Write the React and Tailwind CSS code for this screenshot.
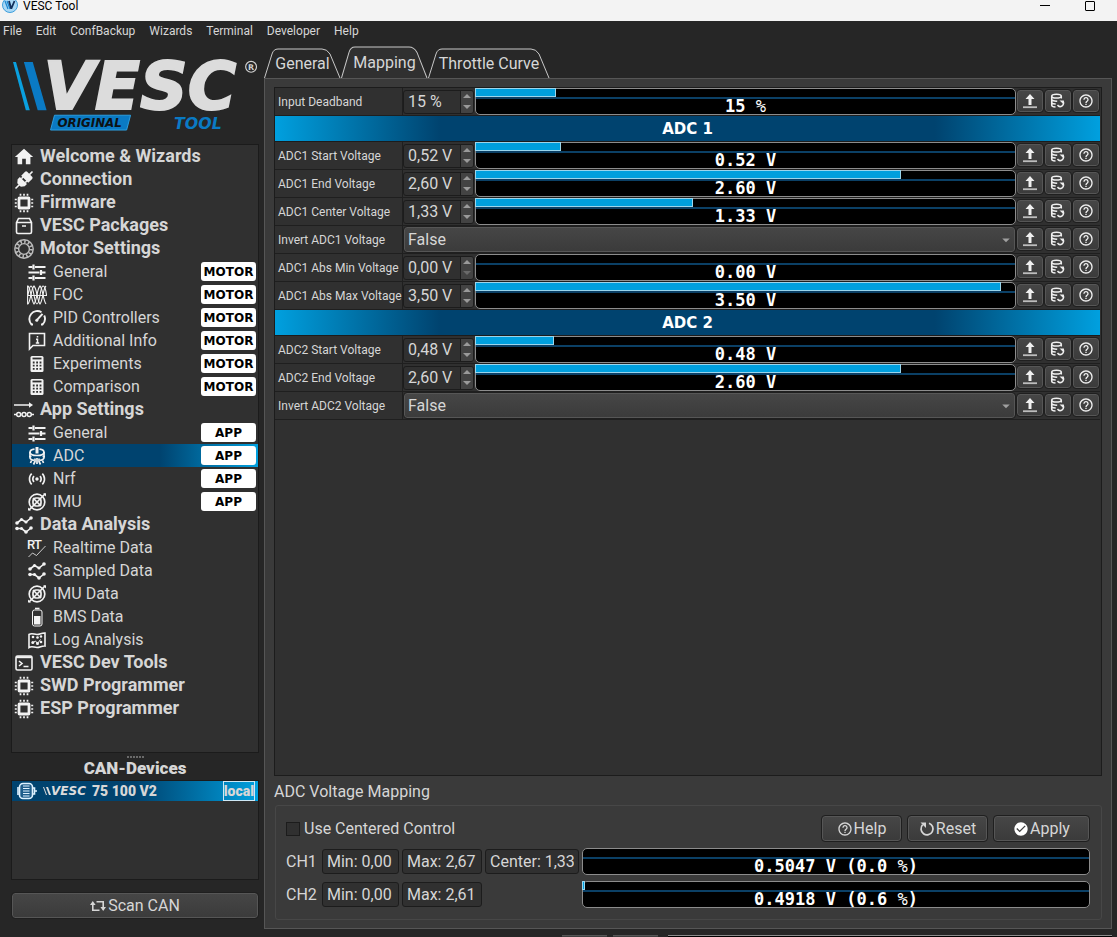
import { useState } from "react";
import { MdHome, MdSensors, MdHelpOutline, MdCheckCircle, MdArrowDropDown } from "react-icons/md";

const Svg = ({ children, size = 20, ...rest }) => (
  <svg width={size} height={size} viewBox="0 0 20 20" fill="none" stroke="currentColor" strokeWidth="1.6" aria-hidden="true" {...rest}>
    {children}
  </svg>
);

const PlugIcon = () => (
  <Svg>
    <g transform="rotate(45 10 10)" fill="currentColor" stroke="none">
      <path d="M9.200-2h1.600v4H9.200zM6.500 2h7A1.500 1.500 0 0 1 15 3.500V9H5V3.500A1.500 1.500 0 0 1 6.500 2z" />
      <path d="M5 10.800h10V14l-2.500 3h-5L5 14zM9.200 17h1.600v5H9.200z" />
      <path d="M6.500 8h1.500v3H6.500zM12 8h1.500v3H12z" />
    </g>
  </Svg>
);

const ChipIcon = () => (
  <Svg>
    <rect x="5" y="5" width="10" height="10" rx=".5" strokeWidth="2.800" />
    <path d="M6.500.8v2M10 .8v2M13.500.8v2M6.500 17.200v2M10 17.200v2M13.500 17.200v2M.8 6.500h2M.8 10h2M.8 13.500h2M17.200 6.500h2M17.200 10h2M17.200 13.500h2" strokeWidth="1.700" />
  </Svg>
);

const PackageIcon = () => (
  <Svg>
    <path d="M2.500 6.500 4.500 2.500h11l2 4v9.500a1.500 1.500 0 0 1-1.500 1.500H4A1.500 1.500 0 0 1 2.500 16zM2.500 6.500h15M8 10h4" />
  </Svg>
);

const MotorIcon = () => (
  <Svg stroke="#bdbdbd">
    <circle cx="10" cy="10" r="9.200" strokeWidth="1.400" />
    <circle cx="10" cy="10" r="7.300" strokeWidth="3" strokeDasharray="1.500 2.320" />
    <circle cx="10" cy="10" r="5.400" strokeWidth="1.400" />
  </Svg>
);

const SlidersIcon = () => (
  <Svg strokeWidth="1.800">
    <path d="M1.500 5h4M8 5h10.500M1.500 10.500h11M15 10.500h3.500M1.500 16h4M8 16h10.500" />
    <path d="M6.500 2.500v5M14 8v5M6.500 13.500v5" strokeWidth="2.200" />
  </Svg>
);

const FocIcon = () => (
  <Svg strokeWidth="1.100">
    <path d="M.6 .5v19M.5 10.500h19.500" />
    <path d="M1 1c3 3 3 14 6 18 3-4 3-15 6-18 3 3 3 14 6 18" />
    <path d="M1 19C4 15 4 4 7 1c3 3 3 14 6 18 3-4 3-15 6-18" />
    <path d="M1 10c1-6 2-9 3-9 3 0 3 18 6 18s3-18 6-18c2 0 3 5 3.500 9" />
  </Svg>
);

const GaugeIcon = () => (
  <Svg strokeWidth="1.900">
    <path d="M4.500 16.500a8 8 0 0 1 10-12.300M17.200 7.500a8 8 0 0 1-1.700 9" />
    <path d="M4 16.500h2M14 16.500h2" />
    <path d="m9.800 12.200 5.700-6.400" strokeWidth="2" />
    <circle cx="9.800" cy="12.200" r="1.500" fill="currentColor" stroke="none" />
  </Svg>
);

const InfoIcon = () => (
  <Svg>
    <path d="M2.500 18V2.500h15v12H6z" />
    <path d="M10.500 5v1.600M9 8.300h1.500v3.600M8.800 12h3.400" strokeWidth="1.500" />
  </Svg>
);

const CalculatorIcon = () => (
  <Svg>
    <path d="M5 2h10a1.500 1.500 0 0 1 1.500 1.500v13A1.500 1.500 0 0 1 15 18H5a1.500 1.500 0 0 1-1.500-1.500v-13A1.500 1.500 0 0 1 5 2z" fill="currentColor" stroke="none" />
    <path d="M5.500 4.500h9" stroke="#303030" strokeWidth="1.800" />
    <path d="M5.800 8.500h8.600M5.800 11.700h8.600M5.800 14.900h8.600" stroke="#303030" strokeWidth="1.800" strokeDasharray="1.800 1.600" />
  </Svg>
);

const AppIcon = () => (
  <Svg strokeWidth="1.500">
    <path d="M0 5h16" />
    <path d="m15 2.300 4 2.700-4 2.700z" fill="currentColor" stroke="none" />
    <path d="M0 14.500h2.500M17.500 14.500H20" />
    <circle cx="4.700" cy="14.500" r="2" />
    <circle cx="10" cy="14.500" r="2" />
    <circle cx="15.300" cy="14.500" r="2" />
  </Svg>
);

const AdcIcon = () => (
  <Svg strokeWidth="1.700">
    <path d="M7.500 3.200C4.800 3.600 3 4.800 3 6.200c0 2 3 3.300 7 3.300s7-1.300 7-3.300c0-1.400-1.800-2.600-4.500-3" />
    <path d="M3 6v5.500c0 1.500 2 2.500 4 2.800M17 6v5.500c0 1.500-2 2.500-4 2.800M2 10.500h2.500M15.500 10.500H18" />
    <path d="m4.500 14.500-1 2.500M15.500 14.500l1 2.500M8 12.500v3l-1.500 3M12 12.500v3l1.500 3M10 12v6" />
    <path d="M10 1v6.500" strokeWidth="3" />
  </Svg>
);

const ImuIcon = () => (
  <Svg strokeWidth="1.700">
    <circle cx="10" cy="10" r="7.800" />
    <rect x="6" y="6" width="8" height="8" rx="3" />
    <path d="M2 18 18.500 1.500M6 6l8 8" />
    <path d="M1 18.500v-3l3 3zM19 1.500v3l-3-3z" fill="currentColor" stroke="none" />
  </Svg>
);

const ChartIcon = () => (
  <Svg strokeWidth="1.600">
    <path d="m3 8 4.500-3.500L12 7l5-4M3 13.500h4.500l4.500 3.500 5-4" />
    <g fill="currentColor" stroke="none">
      <circle cx="3" cy="8" r="1.800" /><circle cx="7.500" cy="4.500" r="1.600" /><circle cx="12" cy="7" r="1.600" /><circle cx="17" cy="3" r="1.800" />
      <circle cx="3" cy="13.500" r="1.800" /><circle cx="7.500" cy="13.500" r="1.600" /><circle cx="12" cy="17" r="1.800" /><circle cx="17" cy="13" r="1.800" />
    </g>
  </Svg>
);

const RealtimeIcon = () => (
  <Svg className="overflow-visible">
    <text x="1" y="11" fontSize="13" fill="currentColor" stroke="none" className="font-['Roboto',sans-serif] font-medium">
      <tspan x="0">R</tspan>
      <tspan x="7">T</tspan>
    </text>
    <path d="m1.500 19 4-4 4 2.500L18.500 8" strokeWidth=".8" />
  </Svg>
);

const BatteryIcon = () => (
  <Svg>
    <rect x="5.500" y="3" width="9.500" height="16" rx="2" strokeWidth="1" />
    <path d="M8 1.500h4.500" />
    <path d="M7 9h6.500v8.500H7z" fill="currentColor" stroke="none" />
  </Svg>
);

const MapIcon = () => (
  <Svg strokeWidth="1.600">
    <path d="M2 4.500c3-2 5 0 8 0s5-2 8-1.500v13c-3-.5-5 1.500-8 1.500s-5-2-8 0z" />
    <path d="m5.500 13 3-2 2 2.500 3-4" strokeWidth="1" />
    <g fill="currentColor" stroke="none">
      <circle cx="6" cy="7" r="1.300" /><circle cx="10.500" cy="7.500" r="1.300" /><circle cx="14" cy="6.500" r="1.200" />
      <circle cx="5.800" cy="12.500" r="1.500" /><circle cx="10.500" cy="13.500" r="1.500" /><circle cx="14" cy="12" r="1.300" />
    </g>
  </Svg>
);

const ConsoleIcon = () => (
  <Svg>
    <rect x="2" y="3" width="16" height="14" rx="1.500" />
    <path d="M2 4.200h16" strokeWidth="2" />
    <path d="m5 8 3 2.500L5 13M9.500 13.500h5" />
  </Svg>
);

const UploadIcon = () => (
  <Svg size={16} viewBox="0 0 16 16">
    <path d="M8 1 3.500 6H6.500v6h3V6h3z" fill="currentColor" stroke="none" />
    <path d="M1 14.200h14" stroke="#bdbdbd" strokeWidth="1.800" />
  </Svg>
);

const DatabaseIcon = () => (
  <Svg size={16} viewBox="0 0 16 16" strokeWidth="1.500">
    <ellipse cx="6.500" cy="3.200" rx="4.800" ry="1.900" />
    <path d="M1.700 3.200v9c0 1 1.800 1.700 3.800 1.800M11.300 3.200v2.300M1.700 6.300c0 1.200 2.800 2 5.500 1.800M1.700 9.300c0 1.100 2 1.700 4 1.700" />
    <path d="M13 8.200a3.300 3.300 0 1 1-5.500 3.800" />
    <path d="M9.500 7.500h4.300v4z" fill="currentColor" stroke="none" />
  </Svg>
);

const ResetIcon = () => (
  <Svg size={16} viewBox="0 0 16 16" strokeWidth="1.700">
    <path d="M10 2.200a6 6 0 1 1-6.300 1.500" />
    <path d="M1.500 1.500h5.500v5.500z" fill="currentColor" stroke="none" />
  </Svg>
);

const ScanIcon = () => (
  <Svg size={16} viewBox="0 0 16 16" strokeWidth="1.600">
    <path d="M6.500 3.700h6.700v6M9.500 12.300H2.800v-6" />
    <path d="M2.800 3 0 7h5.600zM13.200 13l2.800-4h-5.600z" fill="currentColor" stroke="none" />
  </Svg>
);

const DeviceIcon = () => (
  <Svg>
    <rect x="2.500" y="2.500" width="13" height="15" rx="3.500" fill="#1f5d8a" />
    <path d="M1 6v8M15.500 7h2v6h-2M17.500 10H20" />
    <path d="M6 5h6.500M6 7.500h6.500M6 10h6.500M6 12.500h6.500M6 15h6.500" strokeWidth="1.200" />
  </Svg>
);

const Logo = () => (
  <svg viewBox="0 0 250 80" className="w-full overflow-visible" role="img" aria-label="VESC Original Tool">
    <path d="M1 10h3l14 49h-4z" fill="#0aa0df" />
    <path d="M12 10h9l14 49h-9z" fill="#0a7ac4" />
    <text x="32" y="58" fontSize="67" fill="#dcdcdc" stroke="#dcdcdc" strokeWidth="2" className="font-['DejaVu_Sans',sans-serif] font-bold italic">VESC</text>
    <circle cx="242" cy="15" r="5.500" fill="none" stroke="#d0d0d0" strokeWidth="1.200" />
    <text x="242" y="18" fontSize="8" textAnchor="middle" fill="#d0d0d0" className="font-['DejaVu_Sans',sans-serif] font-bold">R</text>
    <path d="M43 64h77l-4 15H39z" fill="#0a7ac4" stroke="#2d9ee0" />
    <text x="46" y="76" fontSize="12" fill="#0d1114" className="font-['DejaVu_Sans',sans-serif] font-bold italic">ORIGINAL</text>
    <text x="164" y="78" fontSize="16" fill="#0a7ac4" className="font-['DejaVu_Sans',sans-serif] font-bold italic">TOOL</text>
  </svg>
);

const menus = ["File", "Edit", "ConfBackup", "Wizards", "Terminal", "Developer", "Help"];

const pages = [
  { name: "Welcome & Wizards", icon: <MdHome size={22} className="shrink-0" /> },
  { name: "Connection", icon: <PlugIcon /> },
  { name: "Firmware", icon: <ChipIcon /> },
  { name: "VESC Packages", icon: <PackageIcon /> },
  { name: "Motor Settings", icon: <MotorIcon /> },
  { name: "General", icon: <SlidersIcon />, sub: true, badge: "MOTOR" },
  { name: "FOC", icon: <FocIcon />, sub: true, badge: "MOTOR" },
  { name: "PID Controllers", icon: <GaugeIcon />, sub: true, badge: "MOTOR" },
  { name: "Additional Info", icon: <InfoIcon />, sub: true, badge: "MOTOR" },
  { name: "Experiments", icon: <CalculatorIcon />, sub: true, badge: "MOTOR" },
  { name: "Comparison", icon: <CalculatorIcon />, sub: true, badge: "MOTOR" },
  { name: "App Settings", icon: <AppIcon /> },
  { name: "General", icon: <SlidersIcon />, sub: true, badge: "APP" },
  { name: "ADC", icon: <AdcIcon />, sub: true, badge: "APP" },
  { name: "Nrf", icon: <MdSensors size={20} />, sub: true, badge: "APP" },
  { name: "IMU", icon: <ImuIcon />, sub: true, badge: "APP" },
  { name: "Data Analysis", icon: <ChartIcon /> },
  { name: "Realtime Data", icon: <RealtimeIcon />, sub: true },
  { name: "Sampled Data", icon: <ChartIcon />, sub: true },
  { name: "IMU Data", icon: <ImuIcon />, sub: true },
  { name: "BMS Data", icon: <BatteryIcon />, sub: true },
  { name: "Log Analysis", icon: <MapIcon />, sub: true },
  { name: "VESC Dev Tools", icon: <ConsoleIcon /> },
  { name: "SWD Programmer", icon: <ChipIcon /> },
  { name: "ESP Programmer", icon: <ChipIcon /> },
];

const params = [
  { label: "Input Deadband", value: "15 %", text: "15 %", pct: 15 },
  { group: "ADC 1" },
  { label: "ADC1 Start Voltage", value: "0,52 V", text: "0.52 V", pct: 16 },
  { label: "ADC1 End Voltage", value: "2,60 V", text: "2.60 V", pct: 79 },
  { label: "ADC1 Center Voltage", value: "1,33 V", text: "1.33 V", pct: 40.5 },
  { label: "Invert ADC1 Voltage", bool: true },
  { label: "ADC1 Abs Min Voltage", value: "0,00 V", text: "0.00 V", pct: 0 },
  { label: "ADC1 Abs Max Voltage", value: "3,50 V", text: "3.50 V", pct: 97.5 },
  { group: "ADC 2" },
  { label: "ADC2 Start Voltage", value: "0,48 V", text: "0.48 V", pct: 14.6 },
  { label: "ADC2 End Voltage", value: "2,60 V", text: "2.60 V", pct: 79 },
  { label: "Invert ADC2 Voltage", bool: true },
];

const raised = "border border-[#565656] bg-linear-to-b from-[#464646] to-[#3b3b3b] rounded-[3px] outline outline-[#1f1f1f]";

function ValueBar({ pct, text }) {
  return (
    <div className="relative flex-1 h-[27px] rounded-[5px] border border-[#8c8c8c] bg-black">
      <div className="h-2 border-b-2 border-[#0b4066] box-content" />
      {pct > 0 && (
        <div className="absolute -left-px -top-px h-[9px] bg-[#009fdd] border border-[#9bd5ec]" style={{ width: `${pct}%` }} />
      )}
      <div className="text-center leading-[14px] text-[17px] font-bold text-white font-['DejaVu_Sans_Mono',monospace] whitespace-pre">
        {text.split("%")[0]}
        {text.includes("%") && <span className="font-normal">%</span>}
        {text.split("%")[1]}
      </div>
    </div>
  );
}

function SpinBox({ id, value }) {
  const [val, setVal] = useState(value);
  return (
    <div className="flex w-[71px] h-6 rounded-[3px] border border-[#1c1c1c] bg-[#303030] overflow-hidden">
      <input id={id} value={val} onChange={(e) => setVal(e.target.value)} className="flex-1 min-w-0 pl-1 bg-transparent outline-none" />
      <div className="flex flex-col w-[13px] border-l border-[#1c1c1c] bg-[#434343] text-[#9a9a9a]">
        <button aria-label="Increase" className="flex-1 flex items-center justify-center">
          <svg width="8" height="4" viewBox="0 0 8 4"><path d="M0 4 4 0l4 4z" fill="currentColor" /></svg>
        </button>
        <button aria-label="Decrease" disabled={val.startsWith("0,00")} className="flex-1 flex items-center justify-center disabled:text-[#6a6a6a]">
          <svg width="8" height="4" viewBox="0 0 8 4"><path d="M0 0h8L4 4z" fill="currentColor" /></svg>
        </button>
      </div>
    </div>
  );
}

function RowButton({ label, children }) {
  return (
    <button aria-label={label} className={`${raised} w-[26px] h-[22px] flex items-center justify-center text-[#f0f0f0]`}>
      {children}
    </button>
  );
}

function ParamRow({ row, index }) {
  if (row.group) {
    return (
      <tr>
        <th colSpan={3} className="h-[26px] border-b border-[#1c1c1c] bg-[linear-gradient(to_right,#00a0df,#00436f_20%,#00436f_80%,#00a0df)] text-[15px] leading-5 text-white font-bold font-['DejaVu_Sans',sans-serif]">
          {row.group}
        </th>
      </tr>
    );
  }
  const id = `param-${index}`;
  return (
    <tr>
      <td className="h-7 pl-[3px] border-b border-r border-[#1f1f1f] whitespace-nowrap text-[12px] leading-4">
        <label htmlFor={id}>{row.label}</label>
      </td>
      <td className="h-7 border-b border-[#1f1f1f]">
        {row.bool ? (
          <div className="relative mx-px">
            <select id={id} defaultValue="False" className={`${raised} w-full h-[25px] pl-[3px] appearance-none block`}>
              <option>False</option>
              <option>True</option>
            </select>
            <MdArrowDropDown size={18} className="absolute right-0 top-1 text-[#a0a0a0] pointer-events-none" />
          </div>
        ) : (
          <div className="flex items-center gap-px">
            <SpinBox id={id} value={row.value} />
            <ValueBar pct={row.pct} text={row.text} />
          </div>
        )}
      </td>
      <td className="h-7 border-b border-[#1f1f1f]">
        <div className="flex gap-[2px] pl-px pb-px">
          <RowButton label={`Read ${row.label}`}><UploadIcon /></RowButton>
          <RowButton label={`Default ${row.label}`}><DatabaseIcon /></RowButton>
          <RowButton label={`Help ${row.label}`}><MdHelpOutline size={16} /></RowButton>
        </div>
      </td>
    </tr>
  );
}

function Tab({ name, width, active, onClick }) {
  return (
    <button role="tab" aria-selected={active} onClick={onClick} className={`relative pt-[2px] text-center ${active ? "h-8" : "h-[30px]"}`} style={{ width }}>
      <svg className="absolute inset-0 w-full h-full" viewBox={`0 0 ${width} 30`} preserveAspectRatio="none">
        <path
          d={`M.5 30 8 6Q9.500 1 14 1H${width - 19}Q${width - 14} 1 ${width - 11} 6L${width - 1} 30`}
          fill={active ? "#303030" : "#282828"}
          stroke="#c8c8c8"
        />
      </svg>
      <span className="relative whitespace-nowrap">{name}</span>
    </button>
  );
}

function Sidebar() {
  const [current, setCurrent] = useState(13);
  return (
    <aside className="w-[248px] shrink-0 flex flex-col">
      <div className="h-[93px] pt-[11px] pl-px">
        <Logo />
      </div>
      <nav className="mt-[10px] flex-1 border border-[#1b1b1b] bg-[#303030]">
        {pages.map((page, i) => (
          <button
            key={i}
            onClick={() => setCurrent(i)}
            className={`w-full h-[23px] flex items-center pr-[2px] text-left ${page.sub ? "pl-[15px]" : "pl-[2px] font-bold"} ${i === current ? "bg-linear-to-r from-[#00436f] from-60% to-[#00a0df]" : ""}`}
          >
            <span className="w-5 flex justify-center text-[#f2f2f2]">{page.icon}</span>
            <span className={`flex-1 pl-[6px] ${page.sub ? "" : "pb-px text-[18px]"}`}>{page.name}</span>
            {page.badge && (
              <span className="w-[55px] h-[19px] rounded-[3px] bg-white text-black text-center text-[12px] leading-5 font-bold font-['DejaVu_Sans',sans-serif]">
                {page.badge}
              </span>
            )}
          </button>
        ))}
      </nav>
      <div className="h-[7px] flex items-center justify-center gap-px">
        {[0, 1, 2, 3, 4, 5].map((n) => (
          <span key={n} className="w-[2px] h-[2px] bg-[#6a6a6a]" />
        ))}
      </div>
      <h2 className="h-5 leading-4 text-center text-[17px] font-black">CAN-Devices</h2>
      <div className="h-[100px] border border-[#1b1b1b] bg-[#303030]">
        <button className="w-full h-5 pl-[5px] pr-[3px] flex items-center bg-linear-to-r from-[#00436f] from-50% to-[#00a0df] text-[14px] leading-[18px] font-black">
          <span className="text-[#dff2ff]"><DeviceIcon /></span>
          <svg width="44" height="10" viewBox="0 0 44 10" className="ml-[6px] overflow-visible" aria-hidden="true">
            <path d="M0 1h1l3 8H3zM3 1h2l3 8H6z" fill="#dcdcdc" />
            <text x="8" y="9" fontSize="12" fill="#dcdcdc" className="font-['DejaVu_Sans',sans-serif] font-bold italic">VESC</text>
          </svg>
          <span className="flex-1 pl-[5px] text-left">75 100 V2</span>
          <span className="border border-[#cfe8f5]">local</span>
        </button>
      </div>
      <button className={`${raised} mx-px mt-[13px] h-[25px] flex items-center justify-center gap-[2px]`}>
        <ScanIcon /> Scan CAN
      </button>
    </aside>
  );
}

const ReadBox = ({ label, value, className }) => (
  <input aria-label={label} defaultValue={value} className={`${className} h-[25px] px-1 rounded-[3px] border border-[#1c1c1c] bg-[#303030] outline-none`} />
);

function VoltageMapping() {
  const action = `${raised} h-[25px] flex items-center justify-center gap-px`;
  return (
    <section>
      <h2 className="mt-1 leading-6">ADC Voltage Mapping</h2>
      <div className="mt-px ml-px p-[10px] pr-[11px] pb-[11px] rounded-[3px] border border-[#474747]">
        <div className="flex items-center gap-[7px] pr-px">
          <label className="flex-1 flex items-center gap-1">
            <input type="checkbox" className="appearance-none size-[14px] border border-[#1c1c1c] bg-[#303030] checked:bg-[#009fdd]" />
            Use Centered Control
          </label>
          <button className={`${action} w-[79px]`}><MdHelpOutline size={16} /> Help</button>
          <button className={`${action} w-[79px]`}><ResetIcon /> Reset</button>
          <button className={`${action} w-[95px]`}><MdCheckCircle size={16} color="#fff" /> Apply</button>
        </div>
        <div className="mt-[7px] flex items-center gap-[3px]">
          <span className="w-[33px]">CH1</span>
          <ReadBox label="CH1 min" value="Min: 0,00" className="w-[77px]" />
          <ReadBox label="CH1 max" value="Max: 2,67" className="w-[80px]" />
          <ReadBox label="CH1 center" value="Center: 1,33" className="w-[94px]" />
          <ValueBar pct={0} text="0.5047 V (0.0 %)" />
        </div>
        <div className="mt-[6px] flex items-center gap-[3px]">
          <span className="w-[33px]">CH2</span>
          <ReadBox label="CH2 min" value="Min: 0,00" className="w-[77px]" />
          <ReadBox label="CH2 max" value="Max: 2,61" className="w-[80px]" />
          <span className="w-[94px]" />
          <ValueBar pct={0.5} text="0.4918 V (0.6 %)" />
        </div>
      </div>
    </section>
  );
}

function App() {
  const [tab, setTab] = useState("Mapping");
  return (
    <div className="min-h-screen flex flex-col bg-[#262626] text-[#d6d6d6] text-[16px] leading-5 font-['Roboto',sans-serif]">
      <header className="h-[21px] px-[2px] flex items-start bg-[#f3f3f3] text-black text-[12px] leading-3">
        <svg width="16" height="16" viewBox="0 0 16 16" className="-mt-[3px]" aria-hidden="true">
          <circle cx="8" cy="8" r="7.500" fill="#a9d8f5" stroke="#3f9fdc" />
          <path d="m3 4 3 8M5 4l3 8" stroke="#1b86cf" strokeWidth="1.200" />
          <path d="m7 4 2 7h.5l3-7" fill="none" stroke="#12305c" strokeWidth="1.800" />
        </svg>
        <span className="flex-1 pl-[5px]">VESC Tool</span>
        <button aria-label="Minimize" className="w-[45px] h-[11px] flex items-center justify-center"><span className="w-[10px] h-px bg-black" /></button>
        <button aria-label="Maximize" className="w-[45px] h-[11px] flex items-center justify-center"><span className="size-[10px] border border-black rounded-[1px]" /></button>
        <span className="w-[3px]" />
      </header>
      <div className="h-5 pl-[3px] flex items-center gap-[14px] text-[12px] leading-4">
        {menus.map((m) => (
          <button key={m}>{m}</button>
        ))}
      </div>

      <div className="flex-1 flex gap-[5px] pl-[11px] pr-[5px] pb-[6px]">
        <div className="flex pb-[11px]">
          <Sidebar />
        </div>
        <main className="flex-1 min-w-0 flex flex-col">
          <div role="tablist" className="h-[37px] flex items-end">
            <Tab name="General" width={77} active={tab === "General"} onClick={() => setTab("General")} />
            <Tab name="Mapping" width={87} active={tab === "Mapping"} onClick={() => setTab("Mapping")} />
            <Tab name="Throttle Curve" width={122} active={tab === "Throttle Curve"} onClick={() => setTab("Throttle Curve")} />
          </div>
          <div className="flex-1 flex flex-col px-[9px] py-2 border border-[#565656] bg-[#3a3a3a]">
            <div className="flex-1 pr-px border border-[#1c1c1c] bg-[#303030]">
              <table className="w-full table-fixed border-separate border-spacing-0">
                <colgroup>
                  <col className="w-[128px]" />
                  <col />
                  <col className="w-[84px]" />
                </colgroup>
                <tbody>
                  {params.map((row, i) => (
                    <ParamRow key={i} row={row} index={i} />
                  ))}
                </tbody>
              </table>
            </div>
            <VoltageMapping />
          </div>
        </main>
      </div>
      <footer className="h-[2px] pr-[5px] flex gap-[6px]">
        <span className="w-1/2" />
        <span className="w-[45px] border-t border-[#565656] bg-[#404040]" />
        <span className="w-[45px] border-t border-[#565656] bg-[#404040]" />
        <span className="ml-1 flex-1 border-t border-[#8c8c8c] bg-black" />
      </footer>
    </div>
  );
}

export default App;
